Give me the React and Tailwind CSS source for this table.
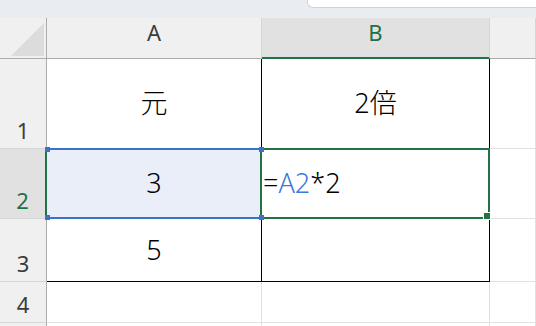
import React from "react";

// column header cell (A, B, C…)
const ColHead = ({ label, active }) => (
  <div
    className={
      "flex items-start justify-center leading-[28px] text-[22px] border-r border-r-[#d6d6d6] " +
      (active
        ? "bg-[#e1e1e1] text-[#1e7145] border-b-2 border-b-[#217346]"
        : "bg-[#f0f0f0] text-[#3c3c3c] border-b border-b-[#acacac]")
    }
  >
    {label}
  </div>
);

// row number cell on the left
const RowHead = ({ label, active }) => (
  <div
    className={
      "flex items-end justify-center pb-[8px] leading-[20px] text-[22px] border-b border-b-[#d6d6d6] " +
      (active
        ? "bg-[#e1e1e1] text-[#1e7145] border-r-2 border-r-[#217346]"
        : "bg-[#f0f0f0] text-[#3c3c3c] border-r border-r-[#acacac]")
    }
  >
    {label}
  </div>
);

// worksheet cell; `boxed` ones carry the thin black table borders
const Cell = ({ children, boxed, className = "" }) => (
  <div
    className={
      "flex items-center justify-center text-[27px] font-light text-black border-r border-b " +
      (boxed ? "border-black " : "border-[#e1e1e1] ") +
      className
    }
  >
    {children}
  </div>
);

const Handle = ({ className }) => (
  <span className={"absolute w-[5px] h-[5px] bg-[#3a72c9] " + className} />
);

export default function App() {
  return (
    <div className="w-[536px] h-[326px] overflow-hidden bg-white font-[family-name:'Noto_Sans','Noto_Sans_CJK_JP',sans-serif]">
      {/* ribbon strip with the name box edge */}
      <div className="h-[18px] bg-[#e9ecf0] flex justify-end">
        <div className="w-[229px] h-[8px] bg-white border-l border-b border-[#cfd2d6] rounded-bl-[6px]" />
      </div>

      <div className="grid grid-cols-[47px_215px_228px_1fr] grid-rows-[41px_90px_70px_63px_41px_1fr] h-[308px]">
        {/* select-all corner */}
        <div className="flex items-end justify-end pr-[2px] pb-[2px] bg-[#f0f0f0] border-r border-b border-[#acacac]">
          <svg width="33" height="33" viewBox="0 0 33 33">
            <polygon points="33,0 33,33 0,33" fill="#dcdcdc" />
          </svg>
        </div>
        <ColHead label="A" />
        <ColHead label="B" active />
        <ColHead label="" />

        {/* row 1 */}
        <RowHead label="1" />
        <Cell boxed>元</Cell>
        <Cell boxed>2倍</Cell>
        <Cell />

        {/* row 2 */}
        <RowHead label="2" active />
        <Cell boxed className="relative bg-[#e9eef8]">
          3
          <div className="absolute -left-px -top-px -right-px -bottom-px border-y-2 border-[#3a72c9] z-20 pointer-events-none">
            <Handle className="-top-[3px] -left-px" />
            <Handle className="-top-[3px] -right-[2px]" />
            <Handle className="-bottom-[3px] -left-px" />
            <Handle className="-bottom-[3px] -right-[2px]" />
          </div>
        </Cell>
        <Cell boxed className="relative justify-start pl-px">
          <span>
            =<span className="text-[#3d78dc]">A2</span>*2
          </span>
          <div className="absolute -left-[2px] -top-px -right-px -bottom-px border-2 border-[#217346] z-10 pointer-events-none">
            <span className="absolute -right-[2px] -bottom-[2px] w-[6px] h-[6px] bg-[#217346] outline outline-white" />
          </div>
        </Cell>
        <Cell />

        {/* row 3 */}
        <RowHead label="3" />
        <Cell boxed>5</Cell>
        <Cell boxed />
        <Cell />

        {/* row 4 */}
        <RowHead label="4" />
        <Cell />
        <Cell />
        <Cell />

        <RowHead label="" />
        <Cell />
        <Cell />
        <Cell />
      </div>
    </div>
  );
}
